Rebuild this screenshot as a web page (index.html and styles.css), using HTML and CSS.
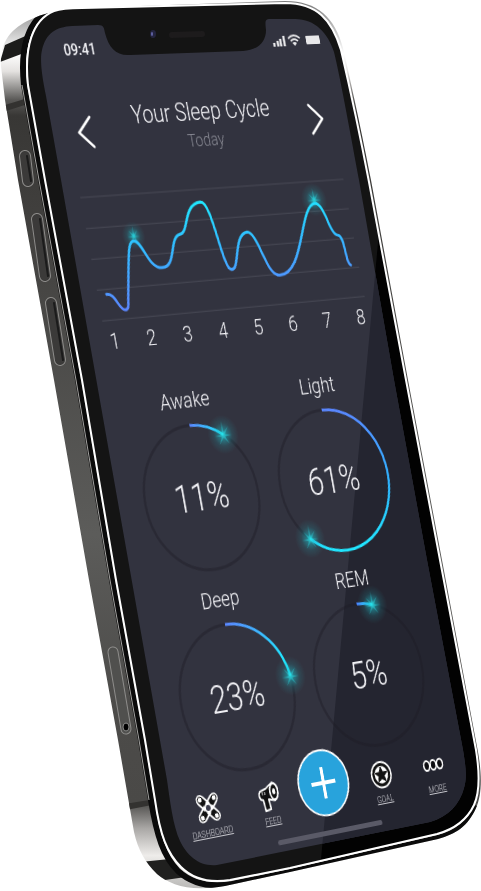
FILE: index.html
```html
<!DOCTYPE html>
<html lang="en">
<head>
<meta charset="utf-8">
<meta name="viewport" content="width=device-width, initial-scale=1">
<title>Your Sleep Cycle</title>
<link rel="stylesheet" href="styles.css">
</head>
<body>
<main class="device">
  <svg class="device-body" viewBox="0 0 481 891" aria-hidden="true">
    <defs>
      <linearGradient id="metal" gradientUnits="userSpaceOnUse" x1="0" y1="0" x2="0" y2="891">
        <stop offset="0" stop-color="#777"/>
        <stop offset=".03" stop-color="#bbb"/>
        <stop offset=".06" stop-color="#fff"/>
        <stop offset=".08" stop-color="#e4e2e0"/>
        <stop offset=".112" stop-color="#5a5957"/>
        <stop offset=".13" stop-color="#383735"/>
        <stop offset=".3" stop-color="#454442"/>
        <stop offset=".6" stop-color="#5c5c5a"/>
        <stop offset=".8" stop-color="#4c4b49"/>
        <stop offset=".9" stop-color="#4a4947"/>
        <stop offset=".93" stop-color="#aaa8a6"/>
        <stop offset=".96" stop-color="#eeecea"/>
        <stop offset="1" stop-color="#b5b4b2"/>
      </linearGradient>
      <clipPath id="shell">
        <path id="silhouette" d="M1 66C-1 40 14 26 34 18C50 11 66 9 82 8L285 1C318 1 335 18 343 48C350 78 363 138 371 180L408 380L442 560L478 752C482 775 482 795 476 808C468 826 456 834 438 839L290 872L225 886C190 892 170 885 157 874C145 862 138 850 134 832L118 740L89 580L54 380L18 180L5 100Z"/>
      </clipPath>
      <clipPath id="glass">
        <path id="glass-edge" d="M28 85C24 48 32 20 54 11C62 8 70 8 82 8L285 3C317 3 332 20 341 50C348 80 361 140 369 182L406 380L440 560L476 750C480 775 480 792 474 805C467 820 455 829 437 834L290 868L230 880C205 884 190 876 181 867C167 853 160 835 155 800L145 740L116 580L82 380L45 180Z"/>
      </clipPath>
    </defs>
    <g clip-path="url(#shell)">
      <path fill="url(#metal)" d="M0 0H481V891H0Z"/>
      <path fill="#1c1c1b" d="M0 62L5 45L30 34L24 53Z"/>
      <path fill="#333230" d="M5 105L28 98L28 104L6 111Z"/>
      <path fill="#333230" d="M124 804L156 799L157 804L126 810Z"/>
      <path fill="#20201f" d="M140 862L170 859L186 877L158 881Z"/>
      <path class="shell-shadow" d="M24 85C20 48 28 18 52 10M24 85L41 180L78 380L112 580L141 740L151 800C157 837 164 857 178 871C190 882 208 888 232 884L290 872L438 838C458 833 470 822 477 806"/>
      <path class="shell-line" d="M22 85L39 180L76 380L110 580L139 740L149 800"/>
    </g>
    <g class="side-pills">
      <path class="pill-rim" d="M25 156L28 181"/><path class="pill-face" d="M25 156L28 181"/>
      <path class="pill-rim" d="M37 219L45 276"/><path class="pill-face" d="M37 219L45 276"/>
      <path class="pill-rim" d="M51 303L60 360"/><path class="pill-face" d="M51 303L60 360"/>
      <path class="pill-highlight" d="M27 156L31 181M40 219L48 276M54 303L63 360"/>
      <path class="pill-rim tray" d="M113 652L126 729"/><path class="pill-face tray" d="M113 652L126 729"/>
      <ellipse cx="126" cy="727" rx="3" ry="4" fill="#000" stroke="#8a8a88"/>
    </g>
    <use href="#glass-edge" class="glass-fill"/>
    <path clip-path="url(#glass)" fill="#020202" d="M386 200L379 232L320 870L481 860V200Z"/>
    <use href="#glass-edge" class="glass-line"/>
    <clipPath id="display">
      <path id="display-edge" d="M46 96C41 72 40 58 42 50C46 33 56 27 72 26L98 25C104 25 104 28 105 33C109 48 116 56 130 55L243 51C258 50 266 42 266 30C265 21 265 19 270 19L295 19C315 19 328 33 334 52C340 76 352 142 359 180L394 380L427 560L463 750C466 768 467 778 464 788C460 804 448 817 430 822L217 865C200 867 187 856 180 841C173 826 170 801 167 780L61 180Z"/>
    </clipPath>
    <g clip-path="url(#display)">
      <path fill="#32333f" d="M0 0H481V891H0Z"/>
      <path fill="#242530" d="M386 200L379 232L320 870L481 860V200Z"/>
    </g>
    <path d="M172 35L202 34" stroke="#1d1b1c" stroke-width="6" stroke-linecap="round"/>
    <ellipse cx="153" cy="34" rx="3" ry="4" fill="#24243f"/>
    <ellipse cx="152" cy="34" rx="1" ry="2" fill="#6264a8"/>
  </svg>

  <div class="screen">
    <div class="status">
      <span class="time">09:41</span>
      <svg class="status-icons" viewBox="0 0 66 14" role="img" aria-label="Signal, Wi-Fi and battery">
        <path d="M2 9V13M7 7V13M11 5V13M16 2V13" stroke="#e8e8ea" stroke-width="3"/>
        <g fill="none" stroke="#e8e8ea" stroke-width="2"><path d="M22 5Q30 -1 38 5"/><path d="M25 8Q30 4 35 8"/></g>
        <path d="M27 10Q30 8 33 10L30 13Z" fill="#e8e8ea"/>
        <rect x="46" y="3" width="19" height="9" rx="1" fill="#e8e8ea"/>
      </svg>
    </div>

    <header class="header">
      <button class="step" aria-label="Previous day"><svg viewBox="0 0 20 34"><path d="M18 2L2 17L18 32"/></svg></button>
      <div class="heading">
        <h1>Your Sleep Cycle</h1>
        <p>Today</p>
      </div>
      <button class="step" aria-label="Next day"><svg viewBox="0 0 20 34"><path d="M2 2L18 17L2 32"/></svg></button>
    </header>

    <svg class="chart" viewBox="0 150 386 154" role="img" aria-label="Sleep depth by hour">
      <defs>
        <linearGradient id="wave" gradientUnits="userSpaceOnUse" x1="0" y1="185" x2="0" y2="287">
          <stop offset="0" stop-color="#20e8ff"/><stop offset=".4" stop-color="#30bdff"/><stop offset="1" stop-color="#5b86ff"/>
        </linearGradient>
        <radialGradient id="halo">
          <stop offset="0" stop-color="#22e8f0" stop-opacity=".85"/><stop offset=".25" stop-color="#1fb9c6" stop-opacity=".5"/><stop offset=".6" stop-color="#1fb9c6" stop-opacity=".15"/><stop offset="1" stop-color="#1fb9c6" stop-opacity="0"/>
        </radialGradient>
        <symbol id="spark" viewBox="-20 -20 40 40">
          <circle r="18" fill="url(#halo)"/>
          <path d="M0 -13L1 -2L7 -7L2 0L10 1L2 2L6 9L0 3L-6 9L-2 2L-10 1L-2 0L-7 -7L-1 -2Z" fill="#2fe6ee" fill-opacity=".35"/>
        </symbol>
      </defs>
      <path class="gridlines" d="M20 172H367M20 203H367M20 234H367M20 265H367M20 296H367"/>
      <use href="#spark" x="62" y="198" width="32" height="32"/>
      <use href="#spark" x="303" y="172" width="38" height="38"/>
      <path class="wave" d="M31 270C41 268 44 287 51 287C56 287 56 282 57 277L64 247C68 231 70 219 77 219C87 219 90 248 106 248C126 250 122 218 137 216C150 215 147 186 171 185C186 185 184 256 196 256C207 257 206 220 225 219C239 220 240 265 257 266C292 268 300 196 322 195C336 196 334 229 346 230C355 231 349 260 356 262"/>
    </svg>
    <ol class="hours"><li>1</li><li>2</li><li>3</li><li>4</li><li>5</li><li>6</li><li>7</li><li>8</li></ol>

    <section class="gauges">
      <article class="gauge">
        <h2>Awake</h2>
        <div class="dial">
          <svg viewBox="0 0 148 148" aria-hidden="true">
            <linearGradient id="g1" gradientUnits="userSpaceOnUse" x1="74" y1="0" x2="114" y2="0"><stop stop-color="#5b86ff"/><stop offset="1" stop-color="#20e8ff"/></linearGradient>
            <circle class="track" cx="74" cy="74" r="73"/>
            <path class="arc" stroke="url(#g1)" d="M74 1A73 73 0 0 1 115 14"/>
            <use href="#spark" x="93" y="-8" width="44" height="44"/>
          </svg>
          <strong>11%</strong>
        </div>
      </article>
      <article class="gauge">
        <h2>Light</h2>
        <div class="dial">
          <svg viewBox="0 0 148 148" aria-hidden="true">
            <linearGradient id="g2" gradientUnits="userSpaceOnUse" x1="0" y1="0" x2="0" y2="148"><stop stop-color="#5b86ff"/><stop offset=".55" stop-color="#2fb2ff"/><stop offset="1" stop-color="#20e8ff"/></linearGradient>
            <circle class="track" cx="74" cy="74" r="73"/>
            <path class="arc" stroke="url(#g2)" d="M74 1A73 73 0 1 1 28 130"/>
            <use href="#spark" x="6" y="108" width="44" height="44"/>
          </svg>
          <strong>61%</strong>
        </div>
      </article>
      <article class="gauge">
        <h2>Deep</h2>
        <div class="dial">
          <svg viewBox="0 0 148 148" aria-hidden="true">
            <linearGradient id="g3" gradientUnits="userSpaceOnUse" x1="74" y1="0" x2="140" y2="50"><stop stop-color="#5b86ff"/><stop offset="1" stop-color="#20e8ff"/></linearGradient>
            <circle class="track" cx="74" cy="74" r="73"/>
            <path class="arc" stroke="url(#g3)" d="M74 1A73 73 0 0 1 146 62"/>
            <use href="#spark" x="124" y="40" width="44" height="44"/>
          </svg>
          <strong>23%</strong>
        </div>
      </article>
      <article class="gauge">
        <h2>REM</h2>
        <div class="dial">
          <svg viewBox="0 0 148 148" aria-hidden="true">
            <linearGradient id="g4" gradientUnits="userSpaceOnUse" x1="74" y1="0" x2="95" y2="0"><stop stop-color="#4a80ff"/><stop offset="1" stop-color="#20e8ff"/></linearGradient>
            <circle class="track" cx="74" cy="74" r="73"/>
            <path class="arc" stroke="url(#g4)" d="M74 1A73 73 0 0 1 95 4"/>
            <use href="#spark" x="73" y="-18" width="44" height="44"/>
          </svg>
          <strong>5%</strong>
        </div>
      </article>
    </section>

    <nav class="tabs">
      <a class="tab" href="#dashboard">
        <svg viewBox="0 0 28 28">
          <path d="M6 6L22 22M22 6L6 22" stroke="#fff" stroke-width="11" stroke-linecap="round"/>
          <g fill="#fff"><circle cx="5" cy="5" r="5"/><circle cx="23" cy="5" r="5"/><circle cx="5" cy="23" r="5"/><circle cx="23" cy="23" r="5"/></g>
          <path d="M6 6L22 22M22 6L6 22" stroke="#111" stroke-width="7" stroke-linecap="round"/>
          <g fill="#fff" stroke="#111" stroke-width="1"><circle cx="5" cy="5" r="3"/><circle cx="23" cy="5" r="3"/><circle cx="5" cy="23" r="3"/><circle cx="23" cy="23" r="3"/></g>
          <path d="M14 6L17 9L14 12L11 9ZM14 16L17 19L14 22L11 19ZM6 14L9 11L12 14L9 17ZM16 14L19 11L22 14L19 17Z" fill="#fff"/>
          <circle cx="14" cy="14" r="4" fill="#3c3d4c" stroke="#fff" stroke-width="2"/>
        </svg>
        <span>DASHBOARD</span>
      </a>
      <a class="tab" href="#feed">
        <svg viewBox="0 0 28 28">
          <path d="M3 8L11 6L20 1Q26 3 26 10Q26 17 21 19L13 17L14 27L7 28L6 17L3 16Q0 12 3 8Z" fill="#111" stroke="#fff" stroke-width="2" stroke-linejoin="round"/>
          <ellipse cx="21" cy="10" rx="5" ry="8" fill="#111" stroke="#fff" stroke-width="2"/>
          <ellipse cx="21" cy="10" rx="2" ry="3" fill="#fff"/>
          <path d="M6 9V12M9 9V12" stroke="#fff"/>
        </svg>
        <span>FEED</span>
      </a>
      <button class="add" aria-label="Add"><svg viewBox="0 0 32 32"><path d="M16 0V32M0 16H32"/></svg></button>
      <a class="tab" href="#goal">
        <svg viewBox="0 0 28 28">
          <circle cx="14" cy="14" r="14" fill="#fff"/><circle cx="14" cy="14" r="12" fill="#111"/><circle cx="14" cy="14" r="9" fill="#fff"/>
          <path d="M14 6L16.300 11.200L22 11.700L17.700 15.500L19 21L14 18L9 21L10.300 15.500L6 11.700L11.700 11.200Z" fill="#111" stroke="#111"/>
        </svg>
        <span>GOAL</span>
      </a>
      <a class="tab" href="#more">
        <svg viewBox="0 0 28 28">
          <g fill="#0c0c10" stroke="#fff" stroke-width="2"><ellipse cx="5" cy="14" rx="4" ry="5"/><ellipse cx="14" cy="14" rx="4" ry="5"/><ellipse cx="23" cy="14" rx="4" ry="5"/></g>
        </svg>
        <span>MORE</span>
      </a>
    </nav>
    <div class="home-bar"></div>
  </div>
</main>
</body>
</html>
```
FILE: styles.css
```css
* { box-sizing: border-box; }

body {
  margin: 0;
  background: #fff;
  color: #f0f0f4;
  font-family: Roboto, "Liberation Sans", sans-serif;
  font-weight: 300;
}

h1, h2, p, ol { margin: 0; padding: 0; font-weight: inherit; }
button { padding: 0; border: 0; background: none; color: inherit; font: inherit; cursor: pointer; }
svg { display: block; overflow: visible; }

/* The phone body and its display share one grid cell. */
.device {
  display: grid;
  justify-content: start;
  overflow: hidden;
}
.device > * { grid-area: 1 / 1; }
.device-body { width: 481px; overflow: hidden; }

.shell-shadow { fill: none; stroke: #0b0b0b; stroke-width: 6; }
.shell-line { fill: none; stroke: #a5a4a2; stroke-width: 1; }
.pill-rim { fill: none; stroke: #8d8c8a; stroke-width: 12; stroke-linecap: round; }
.pill-face { fill: none; stroke: #3b3a39; stroke-width: 10; stroke-linecap: round; }
.pill-highlight { fill: none; stroke: #1b1b1b; stroke-width: 2; stroke-linecap: round; }
.pill-rim.tray { stroke-width: 11; }
.pill-face.tray { stroke: #50504e; stroke-width: 9; }
.glass-fill { fill: #141414; }
.glass-line { fill: none; stroke: #fff; stroke-width: 2; }

/* The display is laid out flat and then tilted with the phone. */
.screen {
  display: flex;
  flex-direction: column;
  width: 390px;
  height: 844px;
  padding-right: 3px;
  transform-origin: 0 0;
  transform: matrix3d(0.80944, -0.025605, 0, 0.00015292, 0.17578, 0.99078, 0, -0.000010575, 0, 0, 1, 0, 34, 28, 0, 1);
}

.status {
  display: flex;
  justify-content: space-between;
  align-items: center;
  height: 46px;
  padding: 0 16px 0 32px;
}
.time { font-size: 16px; font-weight: 500; }
.status-icons { width: 66px; height: 14px; }

.header {
  display: flex;
  justify-content: space-between;
  align-items: center;
  margin-top: 32px;
  padding: 0 31px;
}
.heading { text-align: center; }
.heading h1 { font-size: 25px; line-height: 30px; }
.heading p { color: #858690; font-size: 18px; line-height: 28px; }
.step svg { width: 20px; height: 34px; fill: none; stroke: #fff; stroke-width: 3; stroke-linecap: round; stroke-linejoin: round; }

.chart { width: 100%; margin-top: 14px; }
.gridlines { stroke: #484955; stroke-width: 1; }
.wave { fill: none; stroke: url(#wave); stroke-width: 3; stroke-linecap: round; stroke-linejoin: round; }

.hours {
  display: grid;
  grid-template-columns: repeat(8, 1fr);
  padding: 0 6px 0 8px;
  list-style: none;
  text-align: center;
  font-size: 22px;
  line-height: 28px;
}

.gauges {
  display: grid;
  grid-template-columns: 148px 148px;
  justify-content: center;
  gap: 16px 28px;
  margin-top: 38px;
}
.gauge h2 { margin-bottom: 10px; text-align: center; font-size: 22px; line-height: 28px; }
.dial { display: grid; place-items: center; }
.dial > * { grid-area: 1 / 1; }
.dial svg { width: 100%; }
.dial strong { font-size: 38px; font-weight: 300; }
.track { fill: none; stroke: #1c1822; stroke-opacity: .4; stroke-width: 3; }
.arc { fill: none; stroke-width: 3; }

.tabs {
  display: grid;
  grid-template-columns: 80fr 80fr 64fr 88fr 60fr;
  justify-items: center;
  align-items: end;
  margin-top: -8px;
  padding: 0 11px 0 5px;
}
.tab {
  display: grid;
  justify-items: center;
  gap: 5px;
  color: #c6c6cc;
  font-size: 9px;
  line-height: 12px;
}
.tab svg { width: 28px; height: 28px; }
.add {
  display: grid;
  place-items: center;
  width: 68px;
  height: 68px;
  border: 2px solid #fff;
  border-radius: 50%;
  background: #28a3dc;
}
.add svg { width: 32px; height: 32px; stroke: #fff; stroke-width: 4; }

.home-bar {
  align-self: center;
  width: 140px;
  height: 5px;
  margin-top: 14px;
  border-radius: 3px;
  background: #5a5a67;
}
```
